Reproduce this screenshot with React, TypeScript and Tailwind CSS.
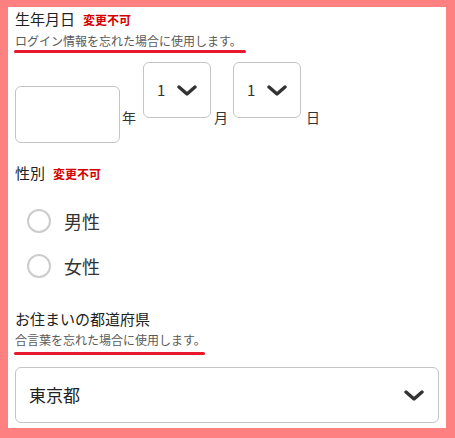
const font = { fontFamily: '"Noto Sans CJK JP", "Noto Sans", sans-serif' };

function Chevron({ className }: { className?: string }) {
  return (
    <svg viewBox="0 0 20 11" className={className} fill="none">
      <polyline points="2,2 10,9 18,2" stroke="#333" strokeWidth="3.4" strokeLinecap="round" strokeLinejoin="round" />
    </svg>
  );
}

function SmallSelect({ value }: { value: string }) {
  return (
    <div className="w-[68px] h-[56px] border border-[#c4c4c4] rounded-[6px] flex items-center pl-[13px] pr-[13px] justify-between bg-white">
      <span className="text-[15px] leading-[20px] text-[#333]">{value}</span>
      <Chevron className="w-[20px] h-[11px]" />
    </div>
  );
}

function Label({ text, locked }: { text: string; locked?: boolean }) {
  return (
    <div className="flex items-baseline gap-[8px] leading-[22px]">
      <span className="text-[15px] text-[#222]">{text}</span>
      {locked && <span className="text-[12px] font-bold text-[#d40000]">変更不可</span>}
    </div>
  );
}

function Note({ text, width, gap }: { text: string; width: string; gap: string }) {
  return (
    <div>
      <p className="text-[12px] leading-[16px] text-[#5a5a5a]">{text}</p>
      <div className={`${gap} ${width} -ml-[1px] h-[3px] rounded-full bg-[#e8192c]`} />
    </div>
  );
}

export default function App() {
  const genders = ['男性', '女性'];
  return (
    <div style={font} className="w-[455px] h-[438px] bg-[#ff8080] pt-[7px] pl-[8px] pr-[9px] pb-[10px]">
      <div className="h-full bg-white px-[7px] pt-[1px] overflow-hidden">
        <Label text="生年月日" locked />
        <div className="mt-[2px]">
          <Note text="ログイン情報を忘れた場合に使用します。" width="w-[232px]" gap="mt-[1px]" />
        </div>

        <div className="mt-[9px] flex items-start text-[14px] leading-[20px] text-[#333]">
          <div className="mt-[24px] w-[105px] h-[57px] border border-[#c4c4c4] rounded-[6px]" />
          <span className="mt-[45px] ml-[2px]">年</span>
          <div className="ml-[7px]">
            <SmallSelect value="1" />
          </div>
          <span className="mt-[45px] ml-[3px]">月</span>
          <div className="ml-[5px]">
            <SmallSelect value="1" />
          </div>
          <span className="mt-[45px] ml-[5px]">日</span>
        </div>

        <div className="mt-[19px]">
          <Label text="性別" locked />
        </div>
        <div className="mt-[13px]">
          {genders.map((g) => (
            <div key={g} className="h-[45px] flex items-center gap-[13px] pl-[12px]">
              <span className="w-[24px] h-[24px] rounded-full border-2 border-[#cccccc]" />
              <span className="text-[18px] leading-[24px] text-[#333]">{g}</span>
            </div>
          ))}
        </div>

        <div className="mt-[20px]">
          <Label text="お住まいの都道府県" />
        </div>
        <div className="mt-[2px]">
          <Note text="合言葉を忘れた場合に使用します。" width="w-[191px]" gap="mt-[4px]" />
        </div>

        <div className="mt-[12px] h-[56px] border border-[#c4c4c4] rounded-[6px] flex items-center justify-between pl-[13px] pr-[14px]">
          <span className="text-[17px] leading-[24px] text-[#222]">東京都</span>
          <Chevron className="w-[20px] h-[11px]" />
        </div>
      </div>
    </div>
  );
}
